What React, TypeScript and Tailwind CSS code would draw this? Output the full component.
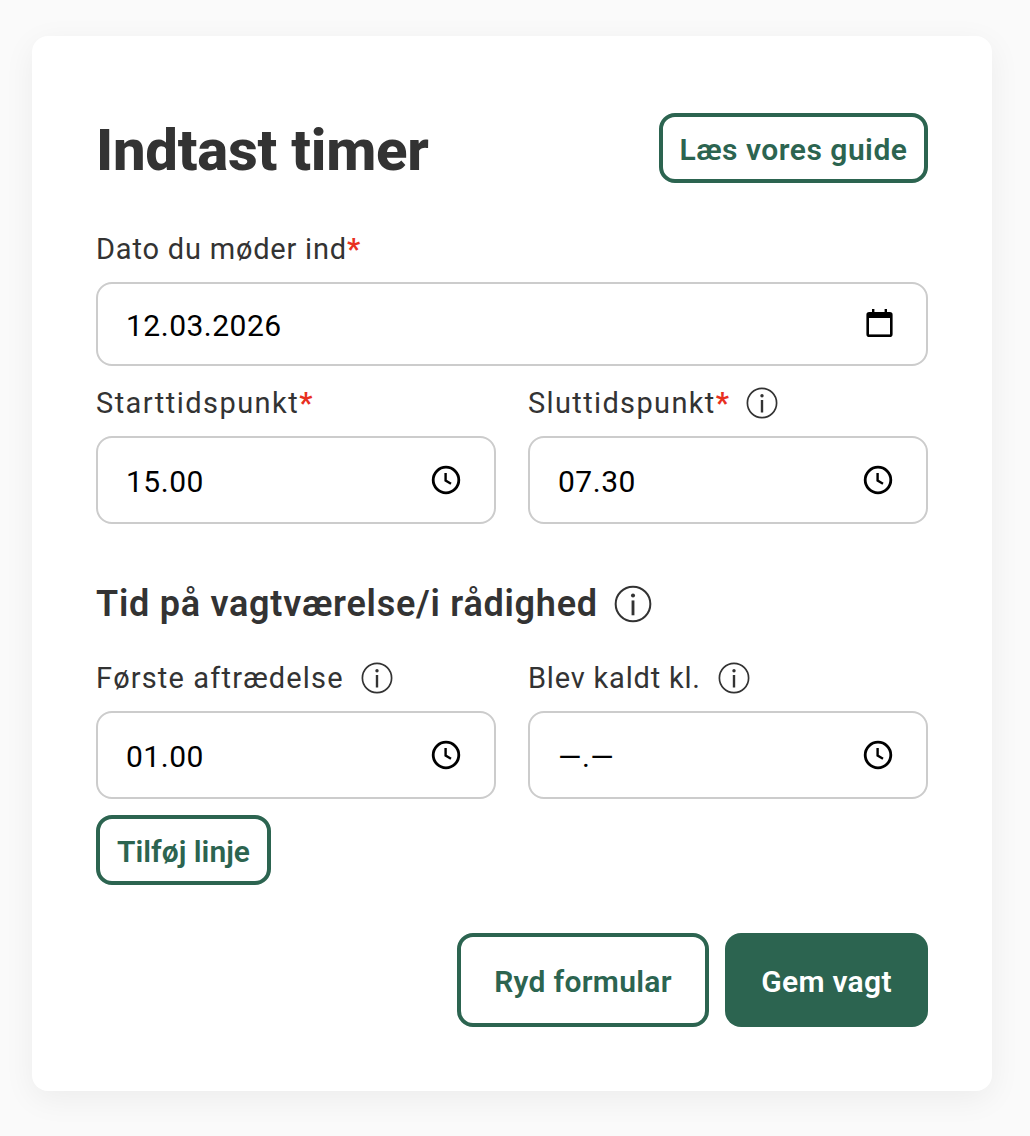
import type { ReactNode } from 'react';

const font = 'font-["Roboto",sans-serif]';

function InfoIcon({ size = 32 }: { size?: number }) {
  return (
    <svg width={size} height={size} viewBox="0 0 32 32" fill="none" stroke="#333333" className="shrink-0">
      <circle cx="16" cy="16" r="14.6" strokeWidth="1.7" />
      <circle cx="16" cy="8.800" r="1.7" fill="#333333" stroke="none" />
      <path d="M16 13v12.500" strokeWidth="2.400" />
    </svg>
  );
}

function ClockIcon() {
  return (
    <svg width="30" height="30" viewBox="0 0 30 30" fill="none" stroke="#000000" strokeWidth="2.800">
      <circle cx="15" cy="15" r="12.800" />
      <path d="M14.600 8v7.500l5.400 3.200" strokeWidth="2.400" />
    </svg>
  );
}

function CalendarIcon() {
  return (
    <svg width="27" height="30" viewBox="0 0 27 30" fill="none" className="-mt-0.5">
      <path d="M6 1h2.400v3h10.200V1H21v3h2.800A2.800 2.800 0 0 1 26.600 6.800v19.400a2.800 2.800 0 0 1-2.800 2.800H3.200A2.800 2.800 0 0 1 .4 26.200V6.800A2.800 2.800 0 0 1 3.200 4H6z" fill="#000000" />
      <rect x="3" y="10" width="21" height="16.400" fill="#ffffff" />
    </svg>
  );
}

function Label({ text, required, info, tracking }: { text: string; required?: boolean; info?: boolean; tracking: string }) {
  return (
    <div className="flex items-center h-[34px] mb-4 text-[29px] leading-[34px] font-[450] text-[#333333]">
      <span className={tracking}>{text}</span>
      {required && <span className="text-[#e8301f] font-bold">*</span>}
      {info && (
        <span className="ml-[17px]">
          <InfoIcon />
        </span>
      )}
    </div>
  );
}

function Field({ value, icon, height }: { value: string; icon: ReactNode; height: string }) {
  return (
    <div className={`${height} flex items-center justify-between pl-[28px] pr-[33px] bg-white border-2 border-[#cccccc] rounded-2xl`}>
      <span className="text-[30px] tracking-[0.5px] text-black pt-0.5">{value}</span>
      {icon}
    </div>
  );
}

function OutlineButton({ children, className }: { children: ReactNode; className: string }) {
  return (
    <button className={`flex items-center justify-center pt-0.5 border-4 border-[#2c6450] rounded-2xl bg-white font-semibold text-[#2c6450] ${className}`}>
      {children}
    </button>
  );
}

export default function App() {
  return (
    <div className={`${font} min-h-[1136px] bg-[#fafafa] pt-9 pl-8 pr-[38px]`}>
      <div className="bg-white rounded-2xl p-16 shadow-[0_8px_32px_rgba(0,0,0,0.06)]">
        <div className="flex items-center justify-between h-[96px] mb-9">
          <h1 className="text-[58px] font-extrabold tracking-[-0.25px] text-[#333333] pt-1">Indtast timer</h1>
          <OutlineButton className="w-[269px] h-[70px] text-[30px] tracking-[0.5px]">Læs vores guide</OutlineButton>
        </div>

        <Label text="Dato du møder ind" required tracking="tracking-[0.8px]" />
        <Field value="12.03.2026" icon={<CalendarIcon />} height="h-[84px]" />

        <div className="grid grid-cols-2 gap-x-8 mt-5">
          <div>
            <Label text="Starttidspunkt" required tracking="tracking-[1.45px]" />
            <Field value="15.00" icon={<ClockIcon />} height="h-[88px]" />
          </div>
          <div>
            <Label text="Sluttidspunkt" required info tracking="tracking-[1.35px]" />
            <Field value="07.30" icon={<ClockIcon />} height="h-[88px]" />
          </div>
        </div>

        <div className="flex items-center h-10 mt-[60px] mb-[37px] text-[36px] font-semibold tracking-[0.75px] text-[#333333]">
          <span>Tid på vagtværelse/i rådighed</span>
          <span className="ml-4">
            <InfoIcon size={38} />
          </span>
        </div>

        <div className="grid grid-cols-2 gap-x-8">
          <div>
            <Label text="Første aftrædelse" info tracking="tracking-[1.15px]" />
            <Field value="01.00" icon={<ClockIcon />} height="h-[88px]" />
          </div>
          <div>
            <Label text="Blev kaldt kl." info tracking="tracking-[0.8px]" />
            <Field value="—.—" icon={<ClockIcon />} height="h-[88px]" />
          </div>
        </div>

        <OutlineButton className="w-[175px] h-[70px] mt-4 text-[30px]">Tilføj linje</OutlineButton>

        <div className="flex justify-end gap-4 mt-12">
          <OutlineButton className="w-[252px] h-[94px] text-[30px] tracking-[0.3px]">Ryd formular</OutlineButton>
          <button className="w-[203px] h-[94px] pt-0.5 rounded-2xl bg-[#2c6450] text-white text-[30px] font-semibold tracking-[0.3px]">Gem vagt</button>
        </div>
      </div>
    </div>
  );
}
